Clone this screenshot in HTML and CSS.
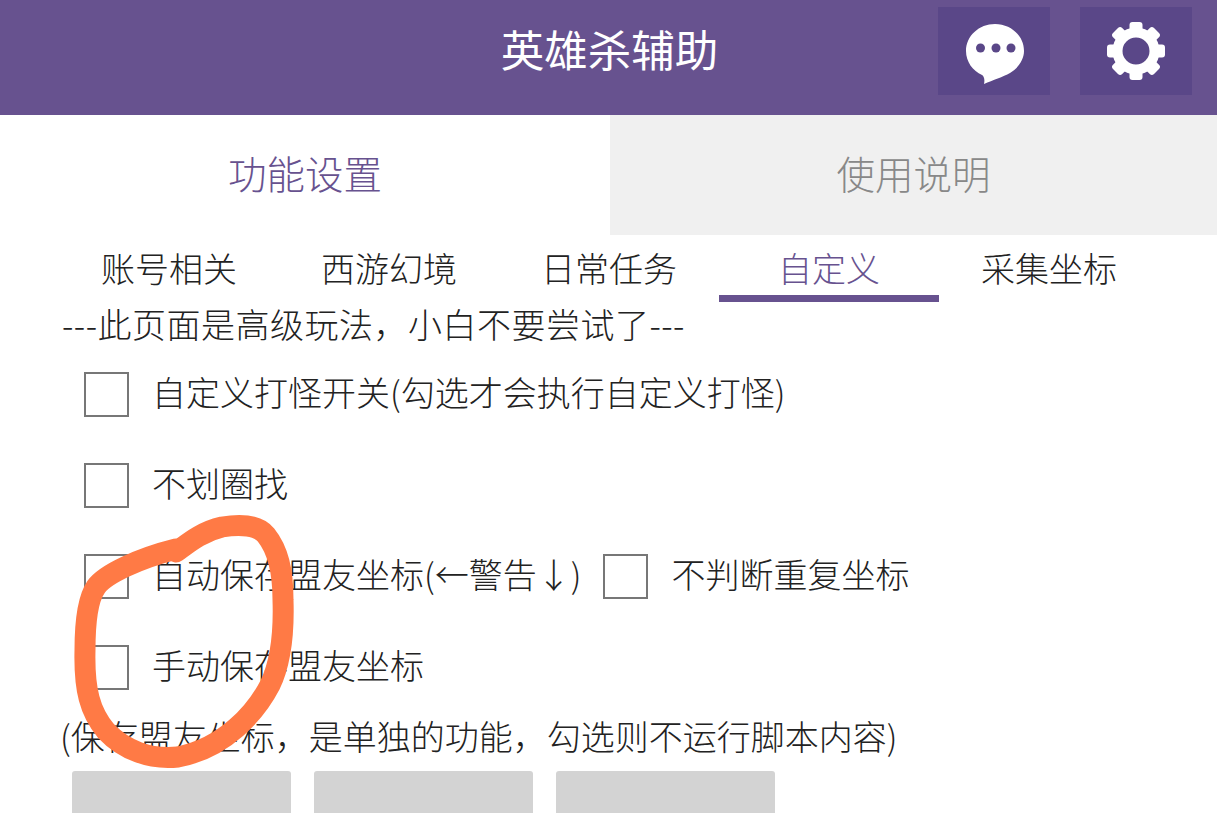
FILE: index.html
```html
<!DOCTYPE html>
<html lang="zh-CN">
<head>
    <meta charset="UTF-8">
    <meta name="viewport" content="width=device-width, initial-scale=1.0">
    <title>英雄杀辅助</title>
    <link rel="stylesheet" href="styles.css">
</head>
<body>
    <div class="page">
        <header class="top-bar">
            <h1 class="top-title">英雄杀辅助</h1>
            <div class="top-btn top-btn-chat">
                <svg width="60" height="62" viewBox="0 0 60 62">
                    <path fill="#fff" d="M30 1C14 1 1 13 1 28 1 39 8 48 17 52 19 53 20 57 19 61 28 57 38 54 45 50 53 45 59 37 59 28 59 13 46 1 30 1z"/>
                    <circle cx="15.500" cy="25" r="4.500" fill="#5a4788"/>
                    <circle cx="31" cy="25" r="4.500" fill="#5a4788"/>
                    <circle cx="46" cy="25" r="4.500" fill="#5a4788"/>
                </svg>
            </div>
            <div class="top-btn">
                <svg width="58" height="58" viewBox="0 0 58 58">
                    <circle cx="29" cy="29" r="18.500" fill="none" stroke="#fff" stroke-width="10"/>
                    <g fill="#fff">
                        <rect x="22.500" y="0" width="13" height="14" rx="3"/>
                        <rect x="22.500" y="0" width="13" height="14" rx="3" transform="rotate(45 29 29)"/>
                        <rect x="22.500" y="0" width="13" height="14" rx="3" transform="rotate(90 29 29)"/>
                        <rect x="22.500" y="0" width="13" height="14" rx="3" transform="rotate(135 29 29)"/>
                        <rect x="22.500" y="0" width="13" height="14" rx="3" transform="rotate(180 29 29)"/>
                        <rect x="22.500" y="0" width="13" height="14" rx="3" transform="rotate(225 29 29)"/>
                        <rect x="22.500" y="0" width="13" height="14" rx="3" transform="rotate(270 29 29)"/>
                        <rect x="22.500" y="0" width="13" height="14" rx="3" transform="rotate(315 29 29)"/>
                    </g>
                </svg>
            </div>
        </header>

        <div class="main-tabs">
            <div class="main-tab active">功能设置</div>
            <div class="main-tab">使用说明</div>
        </div>

        <div class="sub-tabs">
            <div class="sub-tab">账号相关</div>
            <div class="sub-tab">西游幻境</div>
            <div class="sub-tab">日常任务</div>
            <div class="sub-tab active">自定义</div>
            <div class="sub-tab">采集坐标</div>
        </div>

        <div class="content">
            <p class="note note-top">---此页面是高级玩法，小白不要尝试了---</p>
            <div class="check-row">
                <span class="check-box"></span>
                <span class="check-label">自定义打怪开关(勾选才会执行自定义打怪)</span>
            </div>
            <div class="check-row">
                <span class="check-box"></span>
                <span class="check-label">不划圈找</span>
            </div>
            <div class="check-row">
                <span class="check-box"></span>
                <span class="check-label">自动保存盟友坐标(←警告↓)</span>
                <span class="check-box check-second"></span>
                <span class="check-label">不判断重复坐标</span>
            </div>
            <div class="check-row">
                <span class="check-box"></span>
                <span class="check-label">手动保存盟友坐标</span>
            </div>
            <p class="note note-bottom">(保存盟友坐标，是单独的功能，勾选则不运行脚本内容)</p>
            <div class="btn-row">
                <div class="btn"></div>
                <div class="btn"></div>
                <div class="btn"></div>
            </div>
        </div>

        <!-- 手写圈注 -->
        <svg class="scribble" width="1217" height="813" viewBox="0 0 1217 813">
            <path d="M176 552C186 545 200 532 222 527 240 524 258 525 266 535 278 550 283 570 283 600 284 630 282 660 270 685 256 712 225 748 178 757 150 760 124 750 106 731 90 712 84 690 85 650 85 625 87 600 96 587 105 574 140 558 176 549" fill="none" stroke="#ff7a45" stroke-width="21" stroke-linecap="round" stroke-linejoin="round"/>
        </svg>
    </div>
</body>
</html>
```

FILE: styles.css
```css
html, body {
    margin: 0;
    padding: 0;
    background: #fff;
}
.page {
    position: relative;
    width: 1217px;
    height: 813px;
    overflow: hidden;
    font-family: "Noto Sans CJK SC", "Noto Sans", sans-serif;
    font-weight: 300;
    color: #222;
}
.top-bar {
    position: relative;
    display: flex;
    justify-content: flex-end;
    gap: 30px;
    box-sizing: border-box;
    height: 115px;
    padding: 7px 25px 0 0;
    background: #67528f;
}
.top-title {
    position: absolute;
    left: 0;
    right: 0;
    top: 19px;
    margin: 0;
    padding-left: 2px;
    text-align: center;
    font-size: 43.500px;
    line-height: 60px;
    font-weight: 400;
    color: #fff;
}
.top-btn {
    display: flex;
    align-items: center;
    justify-content: center;
    width: 112px;
    height: 88px;
    background: #5a4788;
}
.top-btn-chat svg {
    margin: 5px 0 0 2px;
}
.main-tabs {
    display: flex;
    height: 120px;
}
.main-tab {
    flex: 1;
    text-align: center;
    font-size: 38.500px;
    line-height: 115px;
    color: #888;
    background: #f0f0f0;
}
.main-tab.active {
    flex: none;
    width: 610px;
    color: #67528f;
    background: #fff;
}
.sub-tabs {
    display: flex;
    padding: 0 0 0 59px;
    height: 67px;
}
.sub-tab {
    box-sizing: border-box;
    width: 220px;
    text-align: center;
    font-size: 34px;
    line-height: 65px;
}
.sub-tab.active {
    color: #67528f;
    border-bottom: 7px solid #67528f;
}
.content {
    padding: 0 0 0 62px;
}
.note {
    margin: 0;
    font-size: 34px;
    line-height: 44px;
    white-space: nowrap;
}
.note-top {
    letter-spacing: 0.5px;
}
.note-bottom {
    margin: 4px 0 0 -2px;
}
.check-row {
    display: flex;
    align-items: center;
    height: 91px;
    padding-left: 22px;
    font-size: 34px;
    white-space: nowrap;
}
.check-box {
    flex: none;
    box-sizing: border-box;
    width: 45px;
    height: 45px;
    margin: 6px 23px 0 0;
    border: 2px solid #777;
}
.check-second {
    margin-left: 22px;
}
.btn-row {
    display: flex;
    gap: 23px;
    margin: 13px 0 0 10px;
}
.btn {
    width: 219px;
    height: 60px;
    border-radius: 3px;
    background: #d3d3d3;
}
.scribble {
    position: absolute;
    left: 0;
    top: 0;
}
```
